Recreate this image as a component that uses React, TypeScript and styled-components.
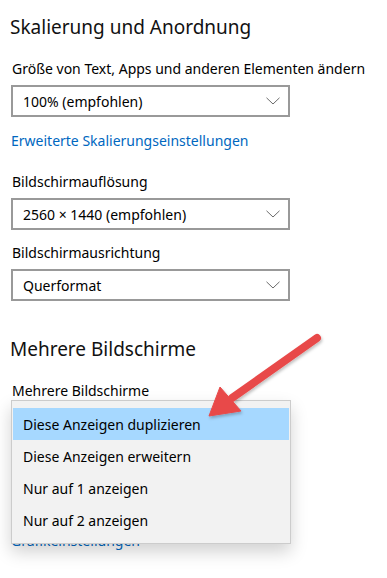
import React from "react";
import styled, { createGlobalStyle } from "styled-components";

const Global = createGlobalStyle`
  html, body { margin: 0; padding: 0; background: #ffffff; }
  body { font-family: "Noto Sans", "Open Sans", Arial, sans-serif; color: #000; }
`;

const Page = styled.div`
  position: relative;
  width: 387px;
  height: 578px;
  overflow: hidden;
  padding: 0 0 0 11px;
  box-sizing: border-box;
  display: flex;
  flex-direction: column;
`;

const Heading = styled.h2<{ $top: number }>`
  margin: ${(p) => p.$top}px 0 0 -1px;
  font-size: 19px;
  font-weight: 400;
  line-height: 26px;
  color: #111;
`;

const Label = styled.div<{ $top: number }>`
  margin: ${(p) => p.$top}px 0 0 1px;
  font-size: 14px;
  line-height: 20px;
`;

const Select = styled.div`
  margin-top: 6px;
  width: 279px;
  height: 32px;
  box-sizing: border-box;
  border: 2px solid #999999;
  display: flex;
  align-items: center;
  justify-content: space-between;
  padding: 0 8px 0 10px;
  font-size: 14px;
`;

const Value = styled.span<{ $hidden?: boolean }>`
  visibility: ${(p) => (p.$hidden ? "hidden" : "visible")};
`;

const Link = styled.a<{ $top: number }>`
  margin-top: ${(p) => p.$top}px;
  font-size: 14px;
  line-height: 20px;
  color: #0067c0;
  text-decoration: none;
`;

const Menu = styled.div`
  position: absolute;
  left: 11px;
  top: 400px;
  width: 280px;
  box-sizing: border-box;
  background: #f2f2f2;
  border: 1px solid #cccccc;
  padding: 7px 1px;
  box-shadow: 0 8px 16px rgba(0, 0, 0, 0.18);
  display: flex;
  flex-direction: column;
`;

const MenuItem = styled.div<{ $active?: boolean }>`
  height: 32px;
  display: flex;
  align-items: center;
  padding-left: 10px;
  font-size: 14px;
  background: ${(p) => (p.$active ? "#a6d8ff" : "transparent")};
`;

const ArrowLayer = styled.svg`
  position: absolute;
  left: 0;
  top: 0;
  pointer-events: none;
`;

const Chevron = () => (
  <svg width="14" height="8" viewBox="0 0 14 8">
    <path d="M0.5 0.8 L7 7 L13.5 0.8" fill="none" stroke="#6b6b6b" strokeWidth="1" />
  </svg>
);

export default function App() {
  return (
    <Page>
      <Global />
      <Heading $top={14}>Skalierung und Anordnung</Heading>
      <Label $top={19}>Größe von Text, Apps und anderen Elementen ändern</Label>
      <Select>
        <Value>100% (empfohlen)</Value>
        <Chevron />
      </Select>
      <Link $top={14}>Erweiterte Skalierungseinstellungen</Link>
      <Label $top={21}>Bildschirmauflösung</Label>
      <Select>
        <Value>2560 × 1440 (empfohlen)</Value>
        <Chevron />
      </Select>
      <Label $top={13}>Bildschirmausrichtung</Label>
      <Select>
        <Value>Querformat</Value>
        <Chevron />
      </Select>
      <Heading $top={35}>Mehrere Bildschirme</Heading>
      <Label $top={19}>Mehrere Bildschirme</Label>
      <Select>
        <Value $hidden>Diese Anzeigen duplizieren</Value>
        <Chevron />
      </Select>
      <Link $top={92}>Grafikeinstellungen</Link>

      <Menu>
        <MenuItem $active>Diese Anzeigen duplizieren</MenuItem>
        <MenuItem>Diese Anzeigen erweitern</MenuItem>
        <MenuItem>Nur auf 1 anzeigen</MenuItem>
        <MenuItem>Nur auf 2 anzeigen</MenuItem>
      </Menu>

      <ArrowLayer width="387" height="578" viewBox="0 0 387 578">
        <defs>
          <filter id="sh" x="-20%" y="-20%" width="140%" height="140%">
            <feDropShadow dx="1" dy="2" stdDeviation="1.5" floodColor="#000" floodOpacity="0.25" />
          </filter>
        </defs>
        <g filter="url(#sh)" fill="#e84a4a" stroke="#e84a4a">
          <line x1="317" y1="338" x2="232" y2="398" strokeWidth="8" strokeLinecap="round" />
          <polygon points="209,416 220,387 241,411" strokeWidth="1" strokeLinejoin="round" />
        </g>
      </ArrowLayer>
    </Page>
  );
}
